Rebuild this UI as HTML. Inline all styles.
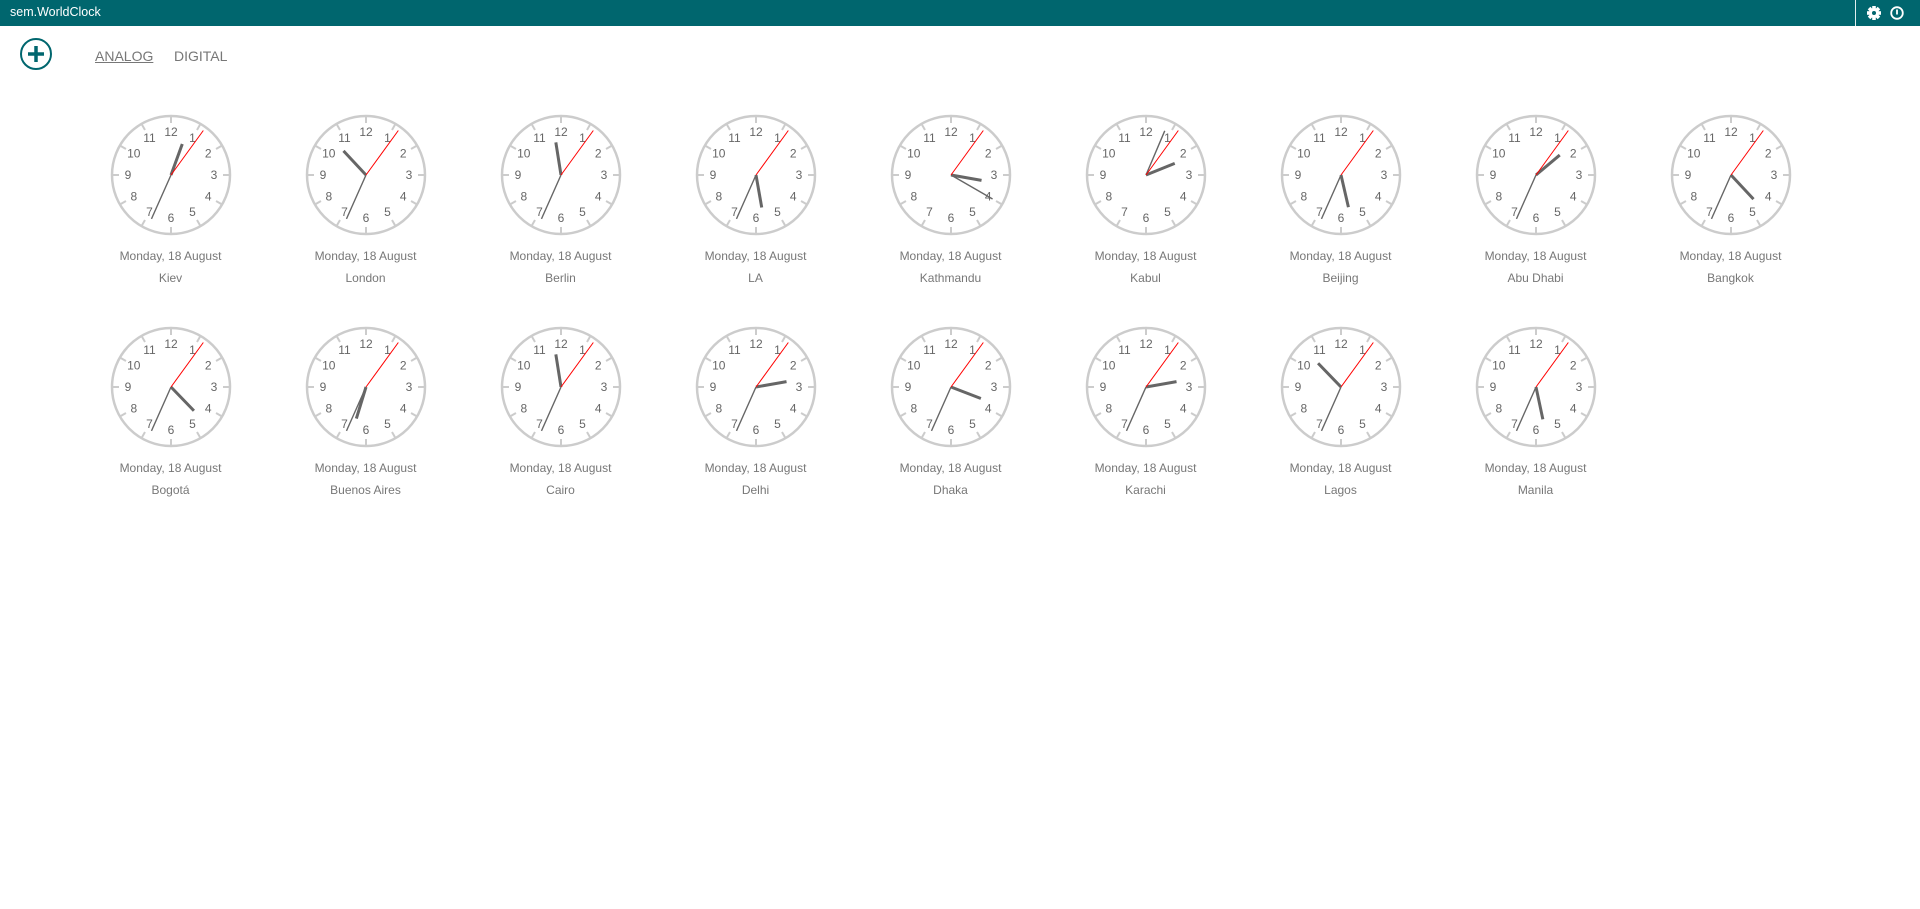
<!DOCTYPE html>
<html><head><meta charset="utf-8"><style>
body{margin:0;width:1920px;height:909px;background:#fff;position:relative;overflow:hidden;font-family:"Segoe UI","Liberation Sans",sans-serif}
.bar{position:absolute;left:0;top:0;width:1920px;height:26px;background:#00666e}
.title{position:absolute;left:10px;top:5px;color:#fff;font-size:12.5px}
.div{position:absolute;left:1855px;top:0;width:1px;height:26px;background:#e0eeee}
.tab{position:absolute;top:48px;font-size:14px;color:#777}
svg.c{position:absolute;width:130px;height:130px}
svg.c text{font-family:"Liberation Sans",sans-serif;font-size:12px;fill:#666;text-anchor:middle;dominant-baseline:central}
.h{stroke:#666;stroke-width:3}
.m{stroke:#666;stroke-width:1.4}
.s{stroke:#f00;stroke-width:1}
.lbl{position:absolute;width:195px;text-align:center;font-size:12px;color:#777;line-height:16px}
</style></head><body>
<div class="bar"><div class="title">sem.WorldClock</div><div class="div"></div>
<svg style="position:absolute;left:1866px;top:5px" width="16" height="16" viewBox="-8 -8 16 16"><g fill="#fff"><circle r="5"/><rect x="-1.8" y="-7" width="3.6" height="14"/><rect x="-1.8" y="-7" width="3.6" height="14" transform="rotate(45)"/><rect x="-1.8" y="-7" width="3.6" height="14" transform="rotate(90)"/><rect x="-1.8" y="-7" width="3.6" height="14" transform="rotate(135)"/></g><circle r="2" fill="#00666e"/></svg>
<svg style="position:absolute;left:1889px;top:5px" width="16" height="16" viewBox="-8 -8 16 16"><circle r="5.8" fill="none" stroke="#fff" stroke-width="1.8"/><rect x="-0.9" y="-3.5" width="1.8" height="5" fill="#fff"/></svg>
</div>
<svg style="position:absolute;left:19px;top:37px" width="34" height="34" viewBox="-17 -17 34 34"><circle r="15" fill="none" stroke="#00666e" stroke-width="2"/><path d="M-8 0H8M0 -8V8" stroke="#00666e" stroke-width="3.5"/></svg>
<div class="tab" style="left:95px;text-decoration:underline">ANALOG</div>
<div class="tab" style="left:174px">DIGITAL</div>
<svg width="0" height="0" style="position:absolute"><defs><g id="f"><circle r="59" fill="none" stroke="#ccc" stroke-width="2.5"/><path d="M0 -52V-58M26 -45.03L29 -50.23M45.03 -26L50.23 -29M52 0H58M45.03 26L50.23 29M26 45.03L29 50.23M0 52V58M-26 45.03L-29 50.23M-45.03 26L-50.23 29M-52 0H-58M-45.03 -26L-50.23 -29M-26 -45.03L-29 -50.23" stroke="#ccc" stroke-width="2"/></g></defs></svg>

<!-- Row 1 -->
<svg class="c" style="left:106px;top:110px" viewBox="-65 -65 130 130"><use href="#f"/><text x="21.5" y="-37.2">1</text><text x="37.2" y="-21.5">2</text><text x="43" y="0">3</text><text x="37.2" y="21.5">4</text><text x="21.5" y="37.2">5</text><text x="0" y="43">6</text><text x="-21.5" y="37.2">7</text><text x="-37.2" y="21.5">8</text><text x="-43" y="0">9</text><text x="-37.2" y="-21.5">10</text><text x="-21.5" y="-37.2">11</text><text x="0" y="-43">12</text><line class="h" y2="-33" transform="rotate(20)"/><line class="m" y2="-48" transform="rotate(204)"/><line class="s" y2="-55" transform="rotate(36)"/></svg>
<svg class="c" style="left:301px;top:110px" viewBox="-65 -65 130 130"><use href="#f"/><text x="21.5" y="-37.2">1</text><text x="37.2" y="-21.5">2</text><text x="43" y="0">3</text><text x="37.2" y="21.5">4</text><text x="21.5" y="37.2">5</text><text x="0" y="43">6</text><text x="-21.5" y="37.2">7</text><text x="-37.2" y="21.5">8</text><text x="-43" y="0">9</text><text x="-37.2" y="-21.5">10</text><text x="-21.5" y="-37.2">11</text><text x="0" y="-43">12</text><line class="h" y2="-33" transform="rotate(317)"/><line class="m" y2="-48" transform="rotate(204)"/><line class="s" y2="-55" transform="rotate(36)"/></svg>
<svg class="c" style="left:496px;top:110px" viewBox="-65 -65 130 130"><use href="#f"/><text x="21.5" y="-37.2">1</text><text x="37.2" y="-21.5">2</text><text x="43" y="0">3</text><text x="37.2" y="21.5">4</text><text x="21.5" y="37.2">5</text><text x="0" y="43">6</text><text x="-21.5" y="37.2">7</text><text x="-37.2" y="21.5">8</text><text x="-43" y="0">9</text><text x="-37.2" y="-21.5">10</text><text x="-21.5" y="-37.2">11</text><text x="0" y="-43">12</text><line class="h" y2="-33" transform="rotate(351)"/><line class="m" y2="-48" transform="rotate(204)"/><line class="s" y2="-55" transform="rotate(36)"/></svg>
<svg class="c" style="left:691px;top:110px" viewBox="-65 -65 130 130"><use href="#f"/><text x="21.5" y="-37.2">1</text><text x="37.2" y="-21.5">2</text><text x="43" y="0">3</text><text x="37.2" y="21.5">4</text><text x="21.5" y="37.2">5</text><text x="0" y="43">6</text><text x="-21.5" y="37.2">7</text><text x="-37.2" y="21.5">8</text><text x="-43" y="0">9</text><text x="-37.2" y="-21.5">10</text><text x="-21.5" y="-37.2">11</text><text x="0" y="-43">12</text><line class="h" y2="-33" transform="rotate(170)"/><line class="m" y2="-48" transform="rotate(204)"/><line class="s" y2="-55" transform="rotate(36)"/></svg>
<svg class="c" style="left:886px;top:110px" viewBox="-65 -65 130 130"><use href="#f"/><text x="21.5" y="-37.2">1</text><text x="37.2" y="-21.5">2</text><text x="43" y="0">3</text><text x="37.2" y="21.5">4</text><text x="21.5" y="37.2">5</text><text x="0" y="43">6</text><text x="-21.5" y="37.2">7</text><text x="-37.2" y="21.5">8</text><text x="-43" y="0">9</text><text x="-37.2" y="-21.5">10</text><text x="-21.5" y="-37.2">11</text><text x="0" y="-43">12</text><line class="h" y2="-31" transform="rotate(100)"/><line class="m" y2="-48" transform="rotate(120)"/><line class="s" y2="-55" transform="rotate(36)"/></svg>
<svg class="c" style="left:1081px;top:110px" viewBox="-65 -65 130 130"><use href="#f"/><text x="21.5" y="-37.2">1</text><text x="37.2" y="-21.5">2</text><text x="43" y="0">3</text><text x="37.2" y="21.5">4</text><text x="21.5" y="37.2">5</text><text x="0" y="43">6</text><text x="-21.5" y="37.2">7</text><text x="-37.2" y="21.5">8</text><text x="-43" y="0">9</text><text x="-37.2" y="-21.5">10</text><text x="-21.5" y="-37.2">11</text><text x="0" y="-43">12</text><line class="h" y2="-31" transform="rotate(68)"/><line class="m" y2="-48" transform="rotate(23)"/><line class="s" y2="-55" transform="rotate(36)"/></svg>
<svg class="c" style="left:1276px;top:110px" viewBox="-65 -65 130 130"><use href="#f"/><text x="21.5" y="-37.2">1</text><text x="37.2" y="-21.5">2</text><text x="43" y="0">3</text><text x="37.2" y="21.5">4</text><text x="21.5" y="37.2">5</text><text x="0" y="43">6</text><text x="-21.5" y="37.2">7</text><text x="-37.2" y="21.5">8</text><text x="-43" y="0">9</text><text x="-37.2" y="-21.5">10</text><text x="-21.5" y="-37.2">11</text><text x="0" y="-43">12</text><line class="h" y2="-33" transform="rotate(167)"/><line class="m" y2="-48" transform="rotate(204)"/><line class="s" y2="-55" transform="rotate(36)"/></svg>
<svg class="c" style="left:1471px;top:110px" viewBox="-65 -65 130 130"><use href="#f"/><text x="21.5" y="-37.2">1</text><text x="37.2" y="-21.5">2</text><text x="43" y="0">3</text><text x="37.2" y="21.5">4</text><text x="21.5" y="37.2">5</text><text x="0" y="43">6</text><text x="-21.5" y="37.2">7</text><text x="-37.2" y="21.5">8</text><text x="-43" y="0">9</text><text x="-37.2" y="-21.5">10</text><text x="-21.5" y="-37.2">11</text><text x="0" y="-43">12</text><line class="h" y2="-31" transform="rotate(50)"/><line class="m" y2="-48" transform="rotate(204)"/><line class="s" y2="-55" transform="rotate(36)"/></svg>
<svg class="c" style="left:1666px;top:110px" viewBox="-65 -65 130 130"><use href="#f"/><text x="21.5" y="-37.2">1</text><text x="37.2" y="-21.5">2</text><text x="43" y="0">3</text><text x="37.2" y="21.5">4</text><text x="21.5" y="37.2">5</text><text x="0" y="43">6</text><text x="-21.5" y="37.2">7</text><text x="-37.2" y="21.5">8</text><text x="-43" y="0">9</text><text x="-37.2" y="-21.5">10</text><text x="-21.5" y="-37.2">11</text><text x="0" y="-43">12</text><line class="h" y2="-33" transform="rotate(137)"/><line class="m" y2="-48" transform="rotate(204)"/><line class="s" y2="-55" transform="rotate(36)"/></svg>

<div class="lbl" style="left:73px;top:248px">Monday, 18 August</div><div class="lbl" style="left:73px;top:270px">Kiev</div>
<div class="lbl" style="left:268px;top:248px">Monday, 18 August</div><div class="lbl" style="left:268px;top:270px">London</div>
<div class="lbl" style="left:463px;top:248px">Monday, 18 August</div><div class="lbl" style="left:463px;top:270px">Berlin</div>
<div class="lbl" style="left:658px;top:248px">Monday, 18 August</div><div class="lbl" style="left:658px;top:270px">LA</div>
<div class="lbl" style="left:853px;top:248px">Monday, 18 August</div><div class="lbl" style="left:853px;top:270px">Kathmandu</div>
<div class="lbl" style="left:1048px;top:248px">Monday, 18 August</div><div class="lbl" style="left:1048px;top:270px">Kabul</div>
<div class="lbl" style="left:1243px;top:248px">Monday, 18 August</div><div class="lbl" style="left:1243px;top:270px">Beijing</div>
<div class="lbl" style="left:1438px;top:248px">Monday, 18 August</div><div class="lbl" style="left:1438px;top:270px">Abu Dhabi</div>
<div class="lbl" style="left:1633px;top:248px">Monday, 18 August</div><div class="lbl" style="left:1633px;top:270px">Bangkok</div>

<!-- Row 2 -->
<svg class="c" style="left:106px;top:322px" viewBox="-65 -65 130 130"><use href="#f"/><text x="21.5" y="-37.2">1</text><text x="37.2" y="-21.5">2</text><text x="43" y="0">3</text><text x="37.2" y="21.5">4</text><text x="21.5" y="37.2">5</text><text x="0" y="43">6</text><text x="-21.5" y="37.2">7</text><text x="-37.2" y="21.5">8</text><text x="-43" y="0">9</text><text x="-37.2" y="-21.5">10</text><text x="-21.5" y="-37.2">11</text><text x="0" y="-43">12</text><line class="h" y2="-33" transform="rotate(136)"/><line class="m" y2="-48" transform="rotate(204)"/><line class="s" y2="-55" transform="rotate(36)"/></svg>
<svg class="c" style="left:301px;top:322px" viewBox="-65 -65 130 130"><use href="#f"/><text x="21.5" y="-37.2">1</text><text x="37.2" y="-21.5">2</text><text x="43" y="0">3</text><text x="37.2" y="21.5">4</text><text x="21.5" y="37.2">5</text><text x="0" y="43">6</text><text x="-21.5" y="37.2">7</text><text x="-37.2" y="21.5">8</text><text x="-43" y="0">9</text><text x="-37.2" y="-21.5">10</text><text x="-21.5" y="-37.2">11</text><text x="0" y="-43">12</text><line class="h" y2="-33" transform="rotate(197)"/><line class="m" y2="-48" transform="rotate(204)"/><line class="s" y2="-55" transform="rotate(36)"/></svg>
<svg class="c" style="left:496px;top:322px" viewBox="-65 -65 130 130"><use href="#f"/><text x="21.5" y="-37.2">1</text><text x="37.2" y="-21.5">2</text><text x="43" y="0">3</text><text x="37.2" y="21.5">4</text><text x="21.5" y="37.2">5</text><text x="0" y="43">6</text><text x="-21.5" y="37.2">7</text><text x="-37.2" y="21.5">8</text><text x="-43" y="0">9</text><text x="-37.2" y="-21.5">10</text><text x="-21.5" y="-37.2">11</text><text x="0" y="-43">12</text><line class="h" y2="-33" transform="rotate(351)"/><line class="m" y2="-48" transform="rotate(204)"/><line class="s" y2="-55" transform="rotate(36)"/></svg>
<svg class="c" style="left:691px;top:322px" viewBox="-65 -65 130 130"><use href="#f"/><text x="21.5" y="-37.2">1</text><text x="37.2" y="-21.5">2</text><text x="43" y="0">3</text><text x="37.2" y="21.5">4</text><text x="21.5" y="37.2">5</text><text x="0" y="43">6</text><text x="-21.5" y="37.2">7</text><text x="-37.2" y="21.5">8</text><text x="-43" y="0">9</text><text x="-37.2" y="-21.5">10</text><text x="-21.5" y="-37.2">11</text><text x="0" y="-43">12</text><line class="h" y2="-31" transform="rotate(80)"/><line class="m" y2="-48" transform="rotate(204)"/><line class="s" y2="-55" transform="rotate(36)"/></svg>
<svg class="c" style="left:886px;top:322px" viewBox="-65 -65 130 130"><use href="#f"/><text x="21.5" y="-37.2">1</text><text x="37.2" y="-21.5">2</text><text x="43" y="0">3</text><text x="37.2" y="21.5">4</text><text x="21.5" y="37.2">5</text><text x="0" y="43">6</text><text x="-21.5" y="37.2">7</text><text x="-37.2" y="21.5">8</text><text x="-43" y="0">9</text><text x="-37.2" y="-21.5">10</text><text x="-21.5" y="-37.2">11</text><text x="0" y="-43">12</text><line class="h" y2="-32" transform="rotate(111)"/><line class="m" y2="-48" transform="rotate(204)"/><line class="s" y2="-55" transform="rotate(36)"/></svg>
<svg class="c" style="left:1081px;top:322px" viewBox="-65 -65 130 130"><use href="#f"/><text x="21.5" y="-37.2">1</text><text x="37.2" y="-21.5">2</text><text x="43" y="0">3</text><text x="37.2" y="21.5">4</text><text x="21.5" y="37.2">5</text><text x="0" y="43">6</text><text x="-21.5" y="37.2">7</text><text x="-37.2" y="21.5">8</text><text x="-43" y="0">9</text><text x="-37.2" y="-21.5">10</text><text x="-21.5" y="-37.2">11</text><text x="0" y="-43">12</text><line class="h" y2="-31" transform="rotate(80)"/><line class="m" y2="-48" transform="rotate(204)"/><line class="s" y2="-55" transform="rotate(36)"/></svg>
<svg class="c" style="left:1276px;top:322px" viewBox="-65 -65 130 130"><use href="#f"/><text x="21.5" y="-37.2">1</text><text x="37.2" y="-21.5">2</text><text x="43" y="0">3</text><text x="37.2" y="21.5">4</text><text x="21.5" y="37.2">5</text><text x="0" y="43">6</text><text x="-21.5" y="37.2">7</text><text x="-37.2" y="21.5">8</text><text x="-43" y="0">9</text><text x="-37.2" y="-21.5">10</text><text x="-21.5" y="-37.2">11</text><text x="0" y="-43">12</text><line class="h" y2="-33" transform="rotate(316)"/><line class="m" y2="-48" transform="rotate(204)"/><line class="s" y2="-55" transform="rotate(36)"/></svg>
<svg class="c" style="left:1471px;top:322px" viewBox="-65 -65 130 130"><use href="#f"/><text x="21.5" y="-37.2">1</text><text x="37.2" y="-21.5">2</text><text x="43" y="0">3</text><text x="37.2" y="21.5">4</text><text x="21.5" y="37.2">5</text><text x="0" y="43">6</text><text x="-21.5" y="37.2">7</text><text x="-37.2" y="21.5">8</text><text x="-43" y="0">9</text><text x="-37.2" y="-21.5">10</text><text x="-21.5" y="-37.2">11</text><text x="0" y="-43">12</text><line class="h" y2="-33" transform="rotate(168)"/><line class="m" y2="-48" transform="rotate(204)"/><line class="s" y2="-55" transform="rotate(36)"/></svg>

<div class="lbl" style="left:73px;top:460px">Monday, 18 August</div><div class="lbl" style="left:73px;top:482px">Bogotá</div>
<div class="lbl" style="left:268px;top:460px">Monday, 18 August</div><div class="lbl" style="left:268px;top:482px">Buenos Aires</div>
<div class="lbl" style="left:463px;top:460px">Monday, 18 August</div><div class="lbl" style="left:463px;top:482px">Cairo</div>
<div class="lbl" style="left:658px;top:460px">Monday, 18 August</div><div class="lbl" style="left:658px;top:482px">Delhi</div>
<div class="lbl" style="left:853px;top:460px">Monday, 18 August</div><div class="lbl" style="left:853px;top:482px">Dhaka</div>
<div class="lbl" style="left:1048px;top:460px">Monday, 18 August</div><div class="lbl" style="left:1048px;top:482px">Karachi</div>
<div class="lbl" style="left:1243px;top:460px">Monday, 18 August</div><div class="lbl" style="left:1243px;top:482px">Lagos</div>
<div class="lbl" style="left:1438px;top:460px">Monday, 18 August</div><div class="lbl" style="left:1438px;top:482px">Manila</div>
</body></html>
